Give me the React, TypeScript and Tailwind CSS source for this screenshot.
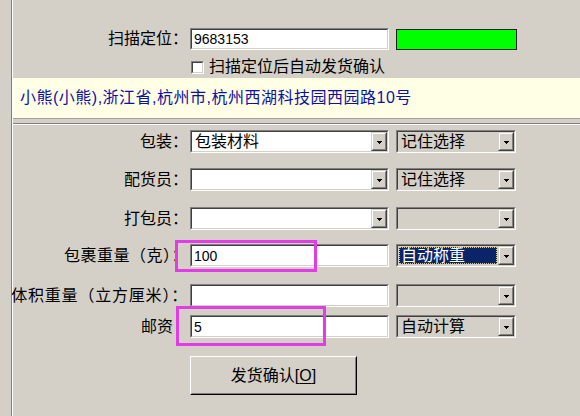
const sunkenOuter =
  'border border-t-[#808080] border-l-[#808080] border-b-white border-r-white';
const sunkenInner =
  'border border-t-[#404040] border-l-[#404040] border-b-[#d4d0c8] border-r-[#d4d0c8]';

function DropButton() {
  return (
    <div className="h-full w-[16px] shrink-0 border border-t-[#d4d0c8] border-l-[#d4d0c8] border-b-[#404040] border-r-[#404040]">
      <div className="flex h-full items-center justify-center border border-t-white border-l-white border-b-[#808080] border-r-[#808080] bg-[#d4d0c8] pt-[2px] pl-[1px]">
        <svg width="5" height="3" viewBox="0 0 5 3" shapeRendering="crispEdges">
          <rect x="0" y="0" width="5" height="1" fill="#000" />
          <rect x="1" y="1" width="3" height="1" fill="#000" />
          <rect x="2" y="2" width="1" height="1" fill="#000" />
        </svg>
      </div>
    </div>
  );
}

function TextBox({ value }: { value?: string }) {
  return (
    <div className={`h-[23px] w-[199px] ${sunkenOuter}`}>
      <div
        className={`flex h-full items-center bg-white pl-[2px] font-['Liberation_Sans',sans-serif] text-[14px] ${sunkenInner}`}
      >
        {value}
      </div>
    </div>
  );
}

function Combo({
  value,
  wide,
  white,
  selected,
}: {
  value?: string;
  wide?: boolean;
  white?: boolean;
  selected?: boolean;
}) {
  return (
    <div className={`h-[23px] ${wide ? 'w-[199px]' : 'w-[120px]'} ${sunkenOuter}`}>
      <div className={`flex h-full ${white ? 'bg-white' : 'bg-[#d4d0c8]'} ${sunkenInner}`}>
        <div className="flex min-w-0 flex-1 items-center p-[1px]">
          {selected ? (
            <span className="flex h-full flex-1 items-center border border-dotted border-[#d8c870] bg-[#0a246a] pl-[1px] text-white">
              {value}
            </span>
          ) : (
            <span className="pl-[2px]">{value}</span>
          )}
        </div>
        <DropButton />
      </div>
    </div>
  );
}

function Row({
  label,
  className = '',
  labelPad = '',
  children,
}: {
  label: string;
  className?: string;
  labelPad?: string;
  children: React.ReactNode;
}) {
  return (
    <div className={`flex h-[23px] items-center ${className}`}>
      <div className={`flex w-[175px] shrink-0 justify-end whitespace-nowrap ${labelPad}`}>
        {label}
      </div>
      <div className="ml-[2px] flex items-center gap-[7px]">{children}</div>
    </div>
  );
}

export default function App() {
  return (
    <div className="relative h-[416px] w-[580px] overflow-hidden bg-[#d4d0c8] pl-[11px] font-['Liberation_Sans','Noto_Sans_CJK_SC',sans-serif] text-[16px] leading-none text-black">
      <div className="h-full border-l border-[#808080]">
        <div className="h-full border-l border-white pt-[28px]">
          {/* scan row */}
          <div className="flex h-[22px] items-center">
            <div className="flex w-[175px] shrink-0 justify-end whitespace-nowrap">扫描定位：</div>
            <div className="ml-[2px] flex items-center gap-[7px]">
              <div className={`h-[22px] w-[199px] ${sunkenOuter}`}>
                <div
                  className={`flex h-full items-center bg-white pl-[2px] font-['Liberation_Sans',sans-serif] text-[14px] ${sunkenInner}`}
                >
                  9683153
                </div>
              </div>
              <div className="h-[21px] w-[121px] border border-[#202020] bg-[#00ff00]" />
            </div>
          </div>

          <div className="mt-[8px] flex h-[18px] items-center pl-[178px]">
            <div className={`h-[13px] w-[13px] ${sunkenOuter}`}>
              <div className={`h-full bg-white ${sunkenInner}`} />
            </div>
            <span className="ml-[5px]">扫描定位后自动发货确认</span>
          </div>

          {/* address strip */}
          <div className="mt-[2px] flex h-[41px] items-center border-b border-[#a0a0a0] bg-[#ffffe6] pl-[7px] tracking-[0.5px] text-[#1010a0]">
            小熊(小熊),浙江省,杭州市,杭州西湖科技园西园路10号
          </div>
          <div className="mt-[4px] h-[2px] border-t border-b border-t-[#808080] border-b-white" />

          <Row label="包装：" className="mt-[5px]">
            <Combo value="包装材料" wide white />
            <Combo value="记住选择" />
          </Row>
          <Row label="配货员：" className="mt-[15px]">
            <Combo wide white />
            <Combo value="记住选择" />
          </Row>
          <Row label="打包员：" className="mt-[16px]">
            <Combo wide white />
            <Combo />
          </Row>
          <Row label="包裹重量（克）：" labelPad="tracking-[0.5px]" className="mt-[14px]">
            <TextBox value="100" />
            <Combo value="自动称重" selected />
          </Row>
          <Row label="体积重量（立方厘米）：" labelPad="tracking-[0.8px]" className="mt-[17px]">
            <TextBox />
            <Combo />
          </Row>
          <Row label="邮资" labelPad="pr-[15px]" className="mt-[8px]">
            <TextBox value="5" />
            <Combo value="自动计算" />
          </Row>

          <button className="ml-[177px] mt-[18px] block h-[39px] w-[167px] border border-t-white border-l-white border-b-black border-r-black bg-[#d4d0c8] p-0">
            <div className="flex h-full items-center justify-center border border-t-[#d4d0c8] border-l-[#d4d0c8] border-b-[#808080] border-r-[#808080]">
              发货确认[<span className="underline underline-offset-2">O</span>]
            </div>
          </button>
        </div>
      </div>

      {/* annotation boxes */}
      <div className="absolute left-[175px] top-[240px] h-[32px] w-[142px] border-[3px] border-[#e23ce6]" />
      <div className="absolute left-[176px] top-[306px] h-[40px] w-[150px] border-[3px] border-[#e23ce6]" />
    </div>
  );
}
